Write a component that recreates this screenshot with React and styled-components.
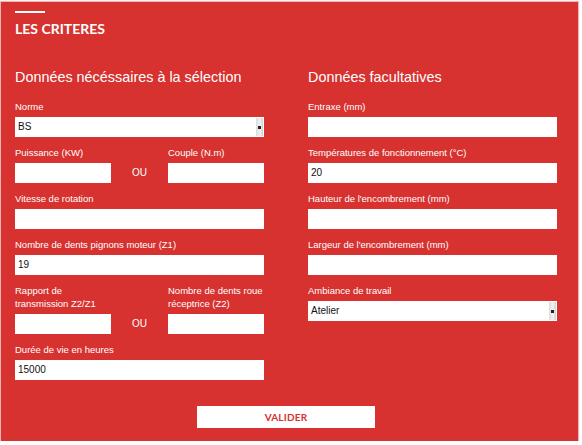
import React from 'react'
import styled, { createGlobalStyle } from 'styled-components'

const RED = '#d7322f'

const GlobalStyle = createGlobalStyle`
  html, body {
    margin: 0;
    padding: 0;
    background: #fff;
  }
  body {
    font-family: "Liberation Sans", Arial, sans-serif;
  }
`

const Panel = styled.div`
  box-sizing: border-box;
  width: 577px;
  height: 439px;
  margin: 2px 0 0 1px;
  padding: 9px 21px 0 14px;
  background: ${RED};
  box-shadow: 0 0 1px 1px rgba(215, 50, 47, 0.35);
  display: flex;
  flex-direction: column;
`

const TitleRule = styled.div`
  width: 30px;
  height: 2px;
  background: #fff;
`

const Title = styled.h2`
  margin: 7px 0 0;
  font-family: Lato, "Open Sans", sans-serif;
  font-weight: 700;
  font-size: 14px;
  line-height: 18px;
  color: #fff;
`

const Columns = styled.div`
  display: grid;
  grid-template-columns: 249px 249px;
  column-gap: 44px;
  margin-top: 30px;
`

const Column = styled.div`
  display: flex;
  flex-direction: column;
`

const Heading = styled.h3`
  margin: 0 0 14px;
  font-weight: 400;
  font-size: 14.4px;
  line-height: 18px;
  color: #fff;
`

const Field = styled.div`
  display: flex;
  flex-direction: column;
  margin-bottom: 9px;
`

const Label = styled.label`
  font-size: 9.5px;
  line-height: 13px;
  color: #fff;
  margin-bottom: 4px;
`

const Input = styled.div`
  box-sizing: border-box;
  height: 20px;
  background: #fff;
  padding: 0 3px;
  font-size: 10px;
  line-height: 20px;
  color: #111;
`

const SelectBox = styled(Input)`
  display: flex;
  justify-content: space-between;
  padding-right: 1px;
`

const SelectArrow = styled.span`
  align-self: center;
  width: 7px;
  height: 18px;
  background: linear-gradient(to right, #dcdcdc, #f2f2f2 60%, #cfcfcf);
  display: flex;
  align-items: center;
  justify-content: center;

  &::after {
    content: '';
    width: 3px;
    height: 3px;
    background: #222;
  }
`

const Pair = styled.div`
  display: grid;
  grid-template-columns: 96px 57px 96px;
  grid-template-rows: auto 20px;
  margin-bottom: 9px;
`

const PairLabel = styled(Label)`
  grid-row: 1;
  grid-column: ${p => p.$col};
  align-self: end;
`

const PairInput = styled(Input)`
  grid-row: 2;
  grid-column: ${p => p.$col};
`

const Or = styled.span`
  grid-row: 2;
  grid-column: 2;
  text-align: center;
  font-size: 10px;
  line-height: 20px;
  color: #fff;
`

const Footer = styled.div`
  display: flex;
  justify-content: center;
  margin-top: 17px;
`

const Submit = styled.button`
  width: 178px;
  height: 22px;
  border: none;
  background: #fff;
  color: ${RED};
  font-family: Lato, "Open Sans", sans-serif;
  font-weight: 700;
  font-size: 10px;
  letter-spacing: 0.2px;
  padding: 0;
  cursor: pointer;
`

const TextField = ({ label, value }) => (
  <Field>
    <Label>{label}</Label>
    <Input>{value}</Input>
  </Field>
)

const SelectField = ({ label, value }) => (
  <Field>
    <Label>{label}</Label>
    <SelectBox>
      <span>{value}</span>
      <SelectArrow />
    </SelectBox>
  </Field>
)

const OrPair = ({ left, right }) => (
  <Pair>
    <PairLabel $col={1}>{left}</PairLabel>
    <PairLabel $col={3}>{right}</PairLabel>
    <PairInput $col={1} />
    <Or>OU</Or>
    <PairInput $col={3} />
  </Pair>
)

export default function App() {
  return (
    <>
      <GlobalStyle />
      <Panel>
        <TitleRule />
        <Title>LES CRITERES</Title>
        <Columns>
          <Column>
            <Heading>Données nécéssaires à la sélection</Heading>
            <SelectField label="Norme" value="BS" />
            <OrPair left="Puissance (KW)" right="Couple (N.m)" />
            <TextField label="Vitesse de rotation" />
            <TextField label="Nombre de dents pignons moteur (Z1)" value="19" />
            <OrPair
              left="Rapport de transmission Z2/Z1"
              right="Nombre de dents roue réceptrice (Z2)"
            />
            <TextField label="Durée de vie en heures" value="15000" />
          </Column>
          <Column>
            <Heading>Données facultatives</Heading>
            <TextField label="Entraxe (mm)" />
            <TextField label="Températures de fonctionnement (°C)" value="20" />
            <TextField label="Hauteur de l'encombrement (mm)" />
            <TextField label="Largeur de l'encombrement (mm)" />
            <SelectField label="Ambiance de travail" value="Atelier" />
          </Column>
        </Columns>
        <Footer>
          <Submit>VALIDER</Submit>
        </Footer>
      </Panel>
    </>
  )
}
